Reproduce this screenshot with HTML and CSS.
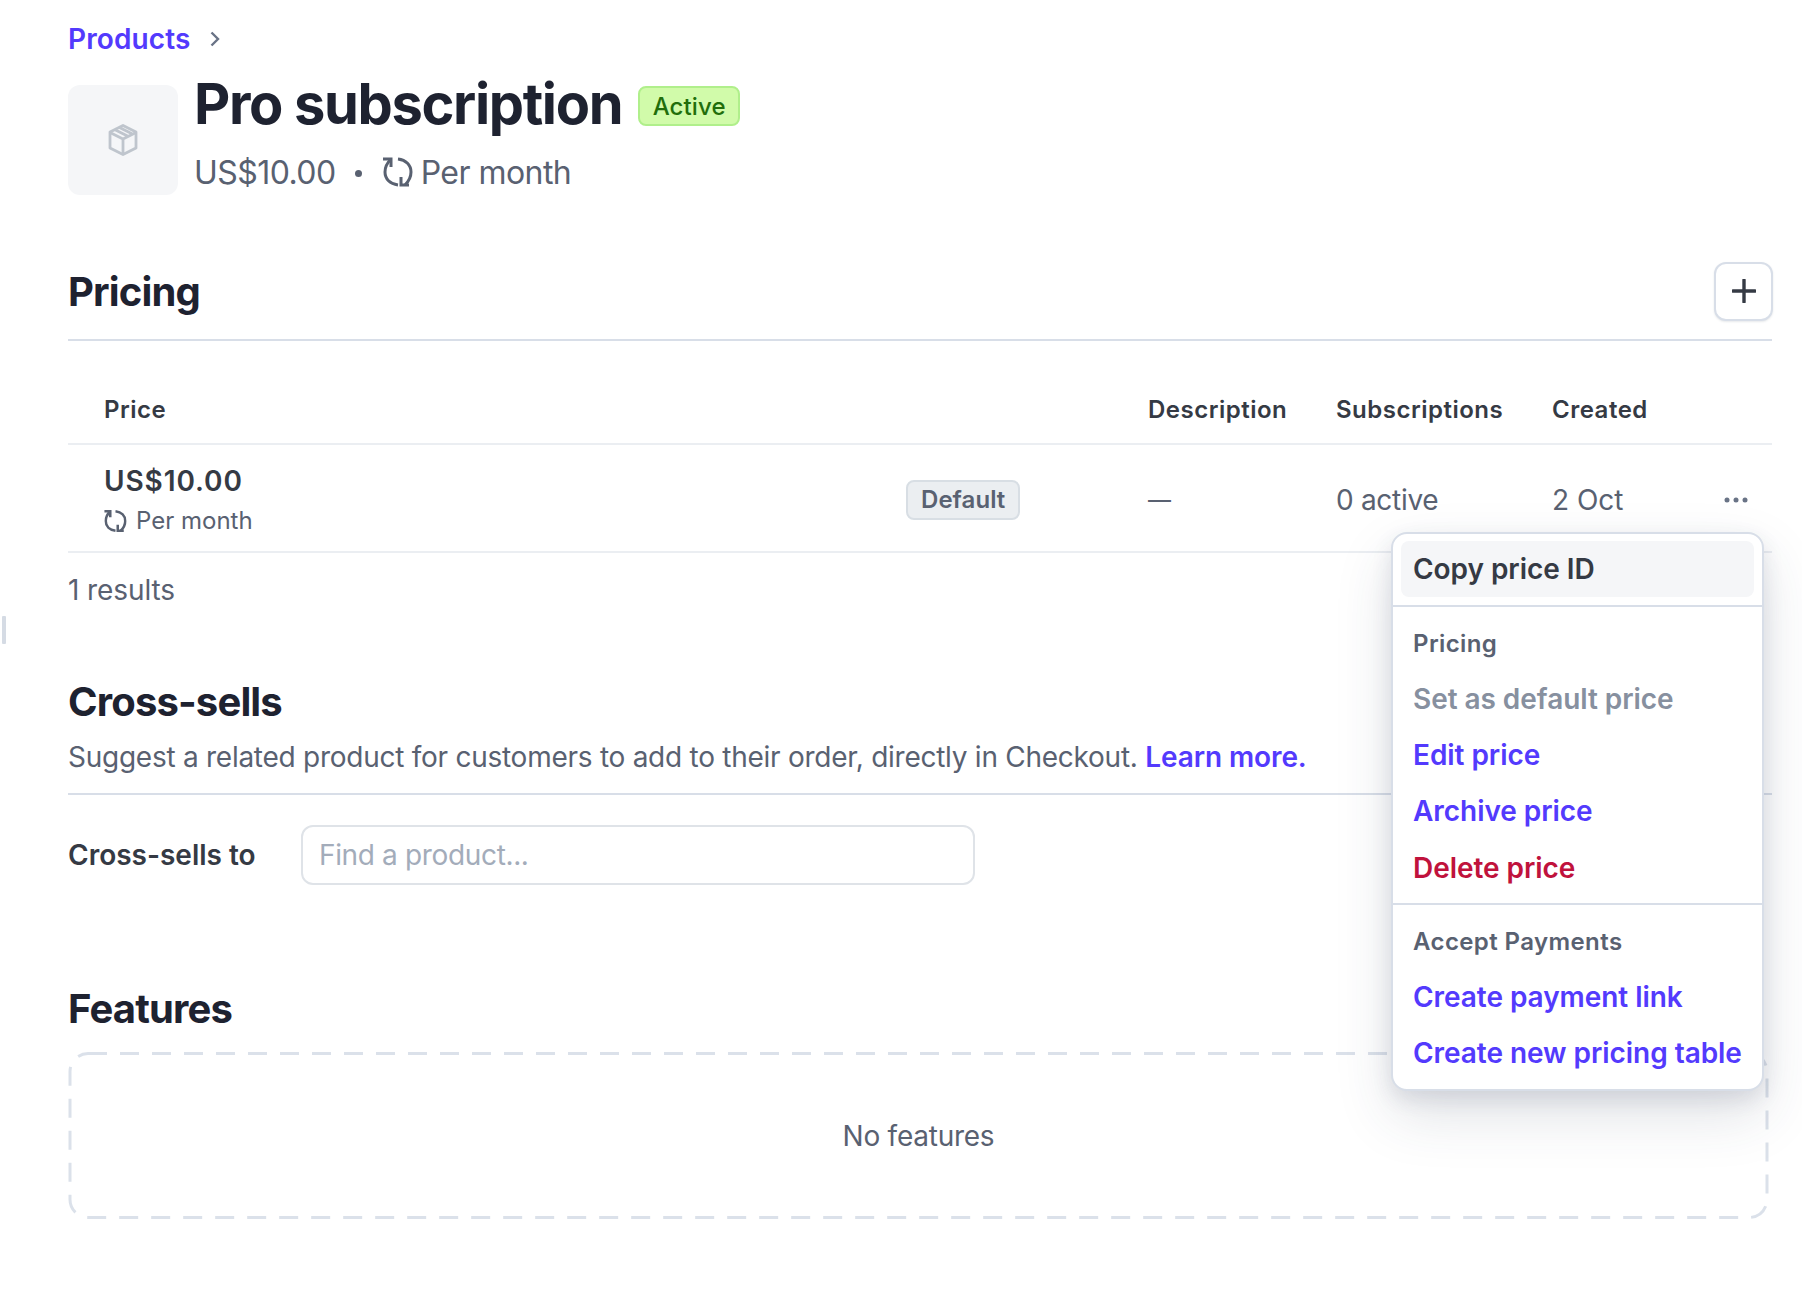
FILE: index.html
```html
<!DOCTYPE html>
<html lang="en">
<head>
<meta charset="utf-8">
<title>Pro subscription</title>
<link rel="stylesheet" href="styles.css">
</head>
<body>
<span class="handle"></span>
<main class="page">
  <nav class="crumbs">
    <a class="link crumb-link">Products</a>
    <svg class="chev" viewBox="0 0 12 18"><path d="M2.500 2.500 9 9l-6.500 6.500"/></svg>
  </nav>
  <header class="product">
    <div class="thumb">
      <svg class="box-icon" viewBox="0 0 30 32">
        <path d="M15 1.500 28 8v16l-13 6.500L2 24V8z"/>
        <path d="M2 8.500 15 15l13-6.500M15 15v15.500M6.500 5.500l13 6.500M11 3.200l13 6.500"/>
      </svg>
    </div>
    <div class="product-text">
      <div class="title-row">
        <h1 class="title">Pro subscription</h1>
        <span class="badge-active">Active</span>
      </div>
      <div class="sub-row">
        <span>US$10.00</span>
        <span class="dot"></span>
        <svg class="cycle cycle-lg" viewBox="0 0 30 32"><use href="#cycle"/></svg>
        <span>Per month</span>
      </div>
    </div>
  </header>

  <svg class="defs" width="0" height="0">
    <symbol id="cycle" viewBox="0 0 30 32">
      <path d="M15 29C7 28 2 23 2 16 2 11 4 7 8 3"/>
      <path d="M15 3c8 1 13 6 13 13 0 5-2 9-6 13"/>
      <path d="M0 3h8v8M18 21v8h8"/>
    </symbol>
  </svg>

  <section class="pricing">
    <div class="section-head">
      <h2 class="heading">Pricing</h2>
      <button class="add-btn" aria-label="Add price">
        <svg viewBox="0 0 24 24"><path d="M12 1v22M1 12h22"/></svg>
      </button>
    </div>
    <div class="table">
      <div class="tr th">
        <span class="c-price">Price</span>
        <span></span>
        <span>Description</span>
        <span>Subscriptions</span>
        <span>Created</span>
        <span></span>
      </div>
      <div class="tr td">
        <div class="c-price">
          <div class="amount">US$10.00</div>
          <div class="period">
            <svg class="cycle cycle-sm" viewBox="0 0 30 32"><use href="#cycle"/></svg>
            <span>Per month</span>
          </div>
        </div>
        <div class="c-badge"><span class="badge-default">Default</span></div>
        <span class="dash">—</span>
        <span class="active-count">0 active</span>
        <span>2 Oct</span>
        <svg class="more" viewBox="0 0 24 6"><circle cx="3" cy="3" r="2.500"/><circle cx="12" cy="3" r="2.500"/><circle cx="21" cy="3" r="2.500"/></svg>
      </div>
    </div>
    <p class="results">1 results</p>
  </section>

  <section class="cross">
    <h2 class="heading">Cross-sells</h2>
    <p class="cross-desc">Suggest a related product for customers to add to their order, directly in Checkout. <a class="link learn">Learn more.</a></p>
    <div class="cross-form">
      <label class="cross-label">Cross-sells to</label>
      <div class="fake-input">Find a product...</div>
    </div>
  </section>

  <section class="features">
    <h2 class="heading">Features</h2>
    <div class="empty">
      <svg class="dashes" viewBox="0 0 1700 167"><rect x="1.500" y="1.500" width="1697" height="164" rx="18"/></svg>
      No features
    </div>
  </section>
</main>

<div class="menu">
  <div class="menu-group first">
    <div class="menu-item hover">Copy price ID</div>
  </div>
  <div class="menu-group">
    <div class="menu-label">Pricing</div>
    <div class="menu-item disabled">Set as default price</div>
    <div class="menu-item blue">Edit price</div>
    <div class="menu-item blue">Archive price</div>
    <div class="menu-item red">Delete price</div>
  </div>
  <div class="menu-group">
    <div class="menu-label">Accept Payments</div>
    <div class="menu-item blue">Create payment link</div>
    <div class="menu-item blue">Create new pricing table</div>
  </div>
</div>
</body>
</html>
```
FILE: styles.css
```css
* { box-sizing: border-box; }
html, body { margin: 0; padding: 0; background: #fff; }
body {
  font-family: Inter, "Liberation Sans", sans-serif;
  color: #1e2230;
  height: 1316px;
  overflow: hidden;
  position: relative;
  -webkit-font-smoothing: antialiased;
}
.defs { position: absolute; }
.handle {
  position: absolute; left: 2px; top: 616px;
  width: 4px; height: 28px; background: #d5dbe4; border-radius: 1px;
}
.page { padding: 20px 30px 0 68px; }
.link { color: #533afd; font-weight: 600; }

.crumbs { display: flex; align-items: center; gap: 19px; height: 38px; }
.crumb-link { font-size: 28px; line-height: 38px; letter-spacing: .1px; }
.chev { width: 12px; height: 18px; fill: none; stroke: #697386; stroke-width: 2.4; }

.product { display: flex; gap: 16px; margin-top: 27px; }
.thumb {
  width: 110px; height: 110px; background: #f5f6f8; border-radius: 12px;
  display: flex; align-items: center; justify-content: center;
}
.box-icon { width: 30px; height: 32px; fill: none; stroke: #bfc5cd; stroke-width: 2.8; stroke-linejoin: round; }
.product-text { margin-top: -13px; }
.title-row { display: flex; align-items: center; gap: 16px; height: 64px; }
.title { margin: 0; font-size: 56px; line-height: 64px; font-weight: 700; color: #1e2230; letter-spacing: -1.35px; }
.badge-active {
  font-size: 24px; line-height: 38px; font-weight: 500; color: #216e0b;
  background: #d1fbaa; border: 2px solid #b0ef8b; border-radius: 8px;
  padding: 0 12.500px; height: 40px; margin-top: 4px; letter-spacing: .1px;
}
.sub-row {
  display: flex; align-items: center; height: 44px; margin-top: 14px;
  font-size: 32px; color: #596171; letter-spacing: -.55px;
}
.dot { width: 7px; height: 7px; border-radius: 50%; background: #596171; margin: 2px 21px 0 19px; }
.cycle { fill: none; stroke: #596171; stroke-width: 3; flex: none; }
.cycle-lg { width: 30px; height: 32px; margin-right: 8px; }
.cycle-sm { width: 23px; height: 24px; margin-right: 9px; stroke-width: 3.4; }

.pricing { margin-top: 68px; }
.section-head {
  display: flex; align-items: center; justify-content: space-between;
  height: 78px; border-bottom: 2px solid #d8dee8; padding-bottom: 20px;
}
.section-head .heading { margin-top: 2px; }
.heading { margin: 0; font-size: 40px; line-height: 48px; font-weight: 700; color: #1e2230; letter-spacing: -.85px; }
.add-btn {
  width: 59px; height: 59px; background: #fff; border: 2px solid #d8dee8; border-radius: 12px;
  padding: 0; display: flex; align-items: center; justify-content: center; margin-right: -1px;
  box-shadow: 0 1px 2px rgba(60,70,90,.12);
}
.add-btn svg { width: 24px; height: 24px; fill: none; stroke: #353a44; stroke-width: 3.4; stroke-linecap: round; }

.tr {
  display: grid;
  grid-template-columns: 838px 242px 188px 216px 1fr 48px;
  align-items: center;
}
.th {
  height: 104px; border-bottom: 2px solid #ebeef2; padding-top: 35px;
  font-size: 24px; font-weight: 600; color: #353a44; letter-spacing: .5px;
}
.td {
  height: 108px; border-bottom: 2px solid #ebeef2; padding-top: 3px;
  font-size: 28px; color: #596171;
}
.td .c-price { margin-top: 3px; }
.c-price { padding-left: 36px; }
.amount { font-size: 28px; line-height: 36px; font-weight: 600; color: #353a44; letter-spacing: .9px; }
.period { display: flex; align-items: center; font-size: 24px; line-height: 36px; color: #596171; margin-top: 4px; }
.c-badge { display: flex; justify-content: flex-start; }
.badge-default {
  font-size: 24px; line-height: 36px; font-weight: 600; color: #596171;
  background: #ebeef1; border: 2px solid #d8dee4; border-radius: 8px;
  padding: 0 13px; height: 40px; letter-spacing: .05px;
}
.dash { font-size: 23px; }
.active-count { letter-spacing: -.3px; }
.more { width: 24px; height: 6px; fill: #697386; }
.results { margin: 18px 0 0; font-size: 28px; line-height: 38px; color: #596171; letter-spacing: -.1px; }

.cross { margin-top: 69px; }
.cross-desc {
  margin: 13px 0 0; padding-bottom: 18px; border-bottom: 2px solid #d8dee8;
  font-size: 28px; line-height: 36px; color: #596171; letter-spacing: -.26px;
}
.learn { font-weight: 600; letter-spacing: -.1px; }
.cross-form { display: flex; align-items: center; margin-top: 30px; }
.cross-label { width: 233px; font-size: 28px; font-weight: 600; color: #353a44; }
.fake-input {
  width: 674px; height: 60px; border: 2px solid #dfe3e8; border-radius: 12px;
  font-size: 28px; line-height: 56px; padding-left: 16px; color: #a3acba; letter-spacing: -.35px;
}

.features { margin-top: 100px; }
.empty {
  position: relative;
  margin: 19px 3px 0 0; height: 167px;
  display: flex; align-items: center; justify-content: center;
  font-size: 28px; color: #596171; letter-spacing: -.25px;
}
.dashes {
  position: absolute; inset: 0; width: 100%; height: 100%;
  fill: none; stroke: #dbe1ea; stroke-width: 3; stroke-dasharray: 19 13;
}

.menu {
  position: absolute; left: 1391px; top: 532px; width: 373px; height: 559px;
  background: #fff; border: 2px solid #d8dee8; border-radius: 16px;
  box-shadow: 0 24px 56px rgba(50,60,90,.15), 0 8px 20px rgba(50,60,90,.12);
  font-size: 28px;
}
.menu-group { padding: 17px 0 0; border-top: 2px solid #d8dee8; }
.menu-group.first { border-top: 0; padding: 7px 8px 8px; }
.menu-group + .menu-group { padding-bottom: 7px; }
.menu-label { padding: 0 20px; height: 40px; line-height: 40px; margin-bottom: 7px; font-size: 24px; font-weight: 600; color: #596171; letter-spacing: .4px; }
.menu-item { padding: 0 20px; height: 56.200px; line-height: 56px; font-weight: 600; white-space: nowrap; letter-spacing: -.05px; }
.menu-item.hover { padding: 0 12px; height: 56px; background: #f5f6f8; border-radius: 8px; color: #353a44; }
.disabled { color: #87909f; }
.blue { color: #533afd; }
.red { color: #c0123c; }
```
